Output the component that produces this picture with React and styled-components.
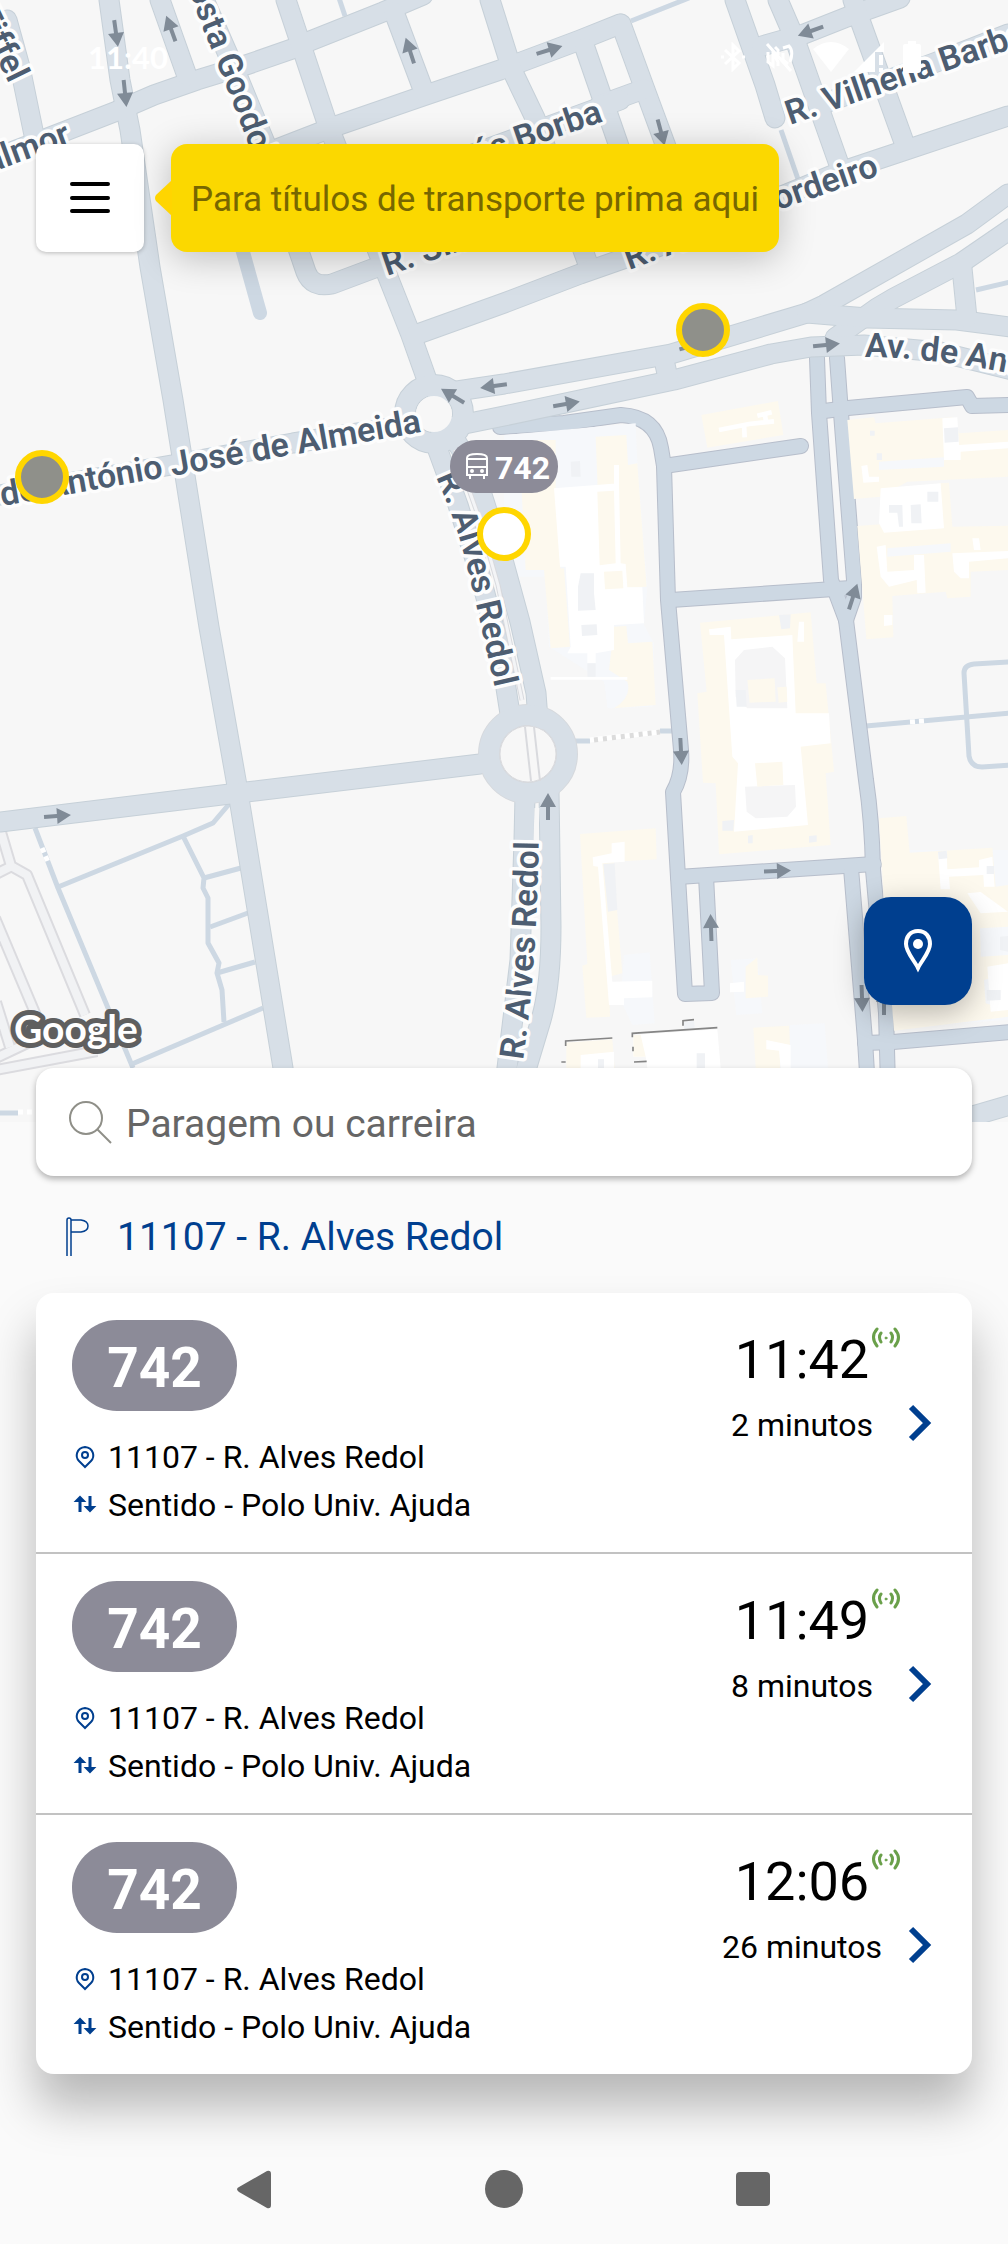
import React from 'react';
import styled, { createGlobalStyle } from 'styled-components';

const GlobalStyle = createGlobalStyle`
    * {
        box-sizing: border-box;
    }
    body {
        margin: 0;
        background-color: #fafafa;
        font-family: Roboto, "Noto Sans", sans-serif;
    }
    button, input {
        font-family: inherit;
    }
`
const Pagina = styled.div`
    display: flex;
    flex-direction: column;
    min-height: 100vh;
`
const ContainerMapa = styled.section`
    position: relative;
    display: flex;
    flex-direction: column;
    height: 1122px;
    padding: 0 36px 117px;
    background-color: #f7f7f7;
    overflow: hidden;
`
const DesenhoMapa = styled.svg`
    position: absolute;
    top: 0;
    left: 0;
    width: 100%;
    height: 100%;
`
const Rotulo = styled.text`
    font-family: Roboto, sans-serif;
    font-size: 34px;
    font-weight: 600;
    fill: #4d5d71;
    stroke: #fdfdfd;
    stroke-width: 7px;
    stroke-linejoin: round;
    paint-order: stroke;
`
const NumeroMapa = styled.text`
    font-family: Roboto, sans-serif;
    font-size: 32px;
    font-weight: 700;
    fill: white;
`
const LogoGoogle = styled.text`
    font-family: Lato, sans-serif;
    font-size: 39px;
    font-weight: 700;
    fill: white;
    stroke: #5f5f5f;
    stroke-width: 10px;
    stroke-linejoin: round;
    paint-order: stroke;
`
const BarraEstado = styled.div`
    position: relative;
    display: flex;
    justify-content: space-between;
    align-items: center;
    height: 114px;
    padding: 0 50px 0 52px;
    color: white;
`
const Hora = styled.span`
    font-family: Lato, sans-serif;
    font-size: 31px;
    font-weight: 700;
`
const IconesEstado = styled.div`
    display: flex;
    align-items: center;
    gap: 18px;
`
const IconesRede = styled.div`
    display: flex;
    align-items: center;
    gap: 4px;
`
const Topo = styled.header`
    position: relative;
    display: flex;
    gap: 27px;
    margin-top: 30px;
`
const BotaoMenu = styled.button`
    display: flex;
    justify-content: center;
    align-items: center;
    width: 108px;
    height: 108px;
    padding: 0;
    border: none;
    border-radius: 10px;
    background-color: white;
    box-shadow: 0 1px 4px rgba(0, 0, 0, 0.25);
    cursor: pointer;
`
const Aviso = styled.div`
    position: relative;
    display: flex;
    align-items: center;
    height: 108px;
    padding: 2px 20px 0;
    border-radius: 16px;
    background-color: #fbd800;
    box-shadow: 0 6px 36px rgba(0, 0, 0, 0.24);
    color: #776700;
    font-size: 35px;
    white-space: nowrap;
`
const SetaAviso = styled.svg`
    position: absolute;
    left: -16px;
    top: 36px;
`
const BotaoLocal = styled.button`
    position: relative;
    display: flex;
    justify-content: center;
    align-items: center;
    align-self: flex-end;
    width: 108px;
    height: 108px;
    margin-top: auto;
    padding: 0;
    border: none;
    border-radius: 27px;
    background-color: #003f8f;
    box-shadow: 0 8px 30px rgba(0, 0, 0, 0.28);
    cursor: pointer;
`
const Painel = styled.main`
    position: relative;
    margin-top: -54px;
    padding: 0 36px;
`
const Pesquisa = styled.label`
    display: flex;
    align-items: center;
    gap: 14px;
    height: 108px;
    padding: 0 32px;
    border-radius: 18px;
    background-color: white;
    box-shadow: 0 3px 6px rgba(0, 0, 0, 0.3);
`
const CampoPesquisa = styled.input`
    flex: 1;
    min-width: 0;
    height: 60px;
    padding: 4px 0 0;
    border: none;
    outline: none;
    background: transparent;
    color: #666666;
    font-size: 39px;
    &::placeholder {
        color: #666666;
        opacity: 1;
    }
`
const Paragem = styled.h1`
    display: flex;
    align-items: center;
    gap: 27px;
    height: 117px;
    margin: 0;
    padding: 4px 28px 0;
    color: #003f8f;
    font-size: 39px;
    font-weight: 400;
`
const Lista = styled.ul`
    margin: 0;
    padding: 0;
    list-style: none;
    border-radius: 18px;
    background-color: white;
    box-shadow: 0 33px 48px rgba(0, 0, 0, 0.27);
`
const Passagem = styled.li`
    display: flex;
    justify-content: space-between;
    height: 261px;
    padding: 27px 36px;
    border-bottom: 2px solid #c2c2c2;
    &:last-child {
        height: 259px;
        border-bottom: none;
    }
`
const Carreira = styled.div`
    display: flex;
    justify-content: center;
    align-items: center;
    width: 165px;
    height: 91px;
    margin-bottom: 22px;
    padding-top: 4px;
    border-radius: 45px;
    background-color: #8c8b98;
    color: white;
    font-size: 55px;
    font-weight: 700;
`
const Detalhe = styled.div`
    display: flex;
    align-items: center;
    gap: 10px;
    height: 48px;
    color: black;
    font-size: 32px;
    svg {
        width: 26px;
    }
`
const Chegada = styled.div`
    display: flex;
    align-items: flex-start;
`
const Tempo = styled.div`
    display: flex;
    flex-direction: column;
    align-items: center;
    width: 180px;
    color: black;
`
const HoraChegada = styled.time`
    position: relative;
    height: 72px;
    font-size: 54px;
    line-height: 80px;
`
const SinalVivo = styled.svg`
    position: absolute;
    left: 100%;
    top: 6px;
`
const Minutos = styled.span`
    font-size: 32px;
    line-height: 66px;
`
const BotaoDetalhe = styled.button`
    display: flex;
    width: 24px;
    height: 40px;
    margin: 83px 4px 0 16px;
    padding: 0;
    border: none;
    background: transparent;
    cursor: pointer;
`
const Navegacao = styled.nav`
    display: flex;
    justify-content: center;
    gap: 210px;
    margin-top: 96px;
    padding-bottom: 34px;
`
const BotaoNavegacao = styled.button`
    display: flex;
    width: 39px;
    height: 39px;
    padding: 0;
    border: none;
    background: transparent;
    cursor: pointer;
`

const ruas = [
    'M109 0L120 80L130 130L150 267L173 400L209 627L236 780L283 1068L290 1122',
    'M-10 160L68 130L117 111L154 95L197 80L246 65L292 49L310 41L383 12L423 -5',
    'M160 0L187 76',
    'M202 -5L237 75L268 150L290 225L306 272Q312 288 332 284L380 266',
    'M286 0L326 120L388 277L411 335L427 380',
    'M274 150L336 126L423 96L500 70L524 61L580 40L620 24',
    'M394 12L424 92',
    'M490 0L512 70L535 118L588 264',
    'M585 48L622 155',
    'M621 24L644 87L668 152',
    'M600 105L644 89',
    'M470 155L620 100',
    'M415 335L504 303L580 274L660 246L840 172L909 149L1008 116',
    'M735 0L765 85L775 118',
    'M778 0L794 37L841 170',
    'M762 46L804 34L847 17L900 -2',
    'M853 0L861 23L905 145',
    'M820 105L934 63L1008 34',
    'M7 20L20 67L34 135',
    'M1008 194L967 224L824 305L807 313L671 354L504 384L437 394',
    'M1012 228L961 263L894 298L877 308L835 338',
    'M440 429L504 416L674 380L771 354L811 347L864 345L940 352L1012 370',
    'M807 313L867 318L957 320L1010 327',
    'M962 268L967 318',
    'M664 360L668 378',
    'M0 495L183 463L293 443L410 425',
    'M436 445L458 505L480 575L500 650L511 720',
    'M452 435L474 470L503 560L520 622L536 693L538 720',
    'M0 822L238 793L480 764',
    'M525 795L524 840L520 960L507 1068L500 1122',
    'M549 790L551 927Q551 985 541 1020L520 1090L505 1122',
    'M962 1119L1010 1105',
]
const ruasLocais = [
    'M500 427L564 423L621 415Q656 417 661 448L664 466L668 600L681 750Q683 775 673 792L678 877L685 994L712 993L706 876',
    'M664 466L801 446',
    'M671 600L834 589L852 588',
    'M817 358L819 413L831 580L846 620L866 780Q872 820 873 870L886 1013L889 1122',
    'M837 358L841 413L854 580L854 597L846 620',
    'M824 411L848 408L967 397L972 406L1010 405',
    'M678 877L874 864',
    'M851 868L865 1040L870 1122',
    'M865 1043L893 1042L1010 1032',
]
const caminhos = [
    'M339 -2L345 16', 'M631 21L689 -2', 'M781 130L799 182', 'M976 290L1010 282',
    'M575 741L590 741', 'M660 731L674 731', 'M866 726L1010 713',
    'M1010 662L974 664Q964 665 964 673L969 756Q971 767 982 767L1010 765',
    'M35 828L58 888L133 1068',
    'M58 887L183 836L213 823L230 803',
    'M183 836L204 878L203 888L208 898L208 943L219 963L217 973L222 990L224 1022',
    'M204 878L241 868', 'M210 927L248 913', 'M217 973L255 962', 'M132 1064L263 1008',
    'M0 1113L18 1113',
]
const trilhos = [
    'M-2 822L11 866L27 875L85 1015', 'M-4 874L12 866', 'M-5 918L38 1020',
    'M-4 1002L10 1047', 'M-4 1058L34 1040', 'M-4 1070L97 1051',
]
const setas = [
    [116, 33, 82], [125, 93, 84], [171, 29, -110], [410, 51, -108], [453, 396, -149],
    [494, 386, 172], [549, 50, -17], [811, 31, 160], [661, 132, 75], [826, 345, -6],
    [566, 404, -10], [692, 346, -15], [853, 597, -72], [681, 751, 87], [548, 807, -90],
    [777, 871, -2], [711, 928, -92], [862, 998, 88], [884, 1002, -90], [57, 816, -4],
]
const passagens = [
    { hora: '11:42', minutos: '2 minutos' },
    { hora: '11:49', minutos: '8 minutos' },
    { hora: '12:06', minutos: '26 minutos' },
]

// Edificios: cada grupo usa uma grelha com 3 unidades por pixel
function Edificios() {
    return (
        <g>
            <g transform="translate(504 380) scale(0.333333)">
                <path fill="#f6f8fb" d="M0 165L395 130L400 250L430 620L420 735L450 790L445 980L310 985L300 905L140 910L100 600L35 595L0 400Z" />
                <path fill="#f7f7f7" d="M45 590L125 590L135 800L300 905L310 985L130 985L125 900Z" />
                <path fill="#fdf9ee" d="M45 180L155 180L155 330L170 570L65 570ZM275 170L367 165L372 255L400 250L428 620L300 628L290 560ZM120 570L180 565L198 800L140 805ZM330 740L367 738L372 790L445 785L455 975L330 985Q385 950 370 905L315 870Z" />
                <path fill="#ffffff" d="M150 325L345 310L350 550L365 552L370 622L415 622L420 730L330 735L330 810L275 820L275 850L250 850L250 820L190 820L200 800L185 560L168 560ZM330 255L345 255L345 330L330 330Z" />
                <path fill="#fdf9ee" d="M280 335L330 332L335 550L287 556ZM300 575L355 572L358 625L303 628Z" />
                <path fill="#f0f2f5" d="M200 245L228 243L230 290L202 290ZM230 580L270 580L270 640L275 690L222 692L222 620ZM232 735L278 733L280 765L234 768ZM250 850L275 850L275 890L250 890Z" />
                <path stroke="#ffffff" strokeWidth="8" d="M140 895L370 895" />
                <path fill="#fdf9ee" d="M592 105L822 63L838 165L610 203Z" />
                <path stroke="#ffffff" strokeWidth="14" fill="none" d="M645 150L735 132L810 124M720 130L722 172M760 107L803 97M782 100L787 130" />
                <path fill="#fdf9ee" d="M1030 120L1110 112L1115 130L1345 112L1365 160L1512 150L1512 290L1210 305L1130 350L1050 357Z" />
                <path fill="#fdf9ee" d="M1060 438L1140 432L1145 455L1310 445L1305 310L1335 308L1345 440L1512 437L1512 570L1400 575L1400 650L1330 655L1325 635L1165 648L1168 772L1087 778Z" />
                <path fill="#f6f8fb" d="M1125 245L1320 232L1320 260L1125 270ZM1150 505L1340 490L1340 515L1150 530Z" />
                <path fill="#ffffff" d="M1315 115L1360 112L1365 195L1512 185L1512 205L1370 215L1370 240L1320 240ZM1130 325L1310 310L1320 445L1140 458L1125 430ZM1072 258L1090 255L1095 290L1125 290L1125 305L1078 308ZM1118 500L1145 495L1150 575L1230 570L1230 525L1260 525L1265 638L1240 640L1238 600L1155 620L1130 590ZM1345 520L1512 513L1512 535L1395 545L1395 595L1370 595L1350 575ZM1405 475L1425 475L1430 510L1410 510ZM1140 705L1165 705L1165 735L1140 738Z" />
                <path fill="#f0f2f5" d="M1220 375L1250 373L1253 430L1222 430ZM1155 375L1195 375L1197 440L1185 440L1180 398L1155 398ZM1270 335L1303 335L1303 365L1270 365ZM1320 145L1362 142L1364 185L1322 188ZM1098 152L1112 152L1112 167L1098 167ZM1118 220L1134 220L1134 240L1118 240Z" />
                <path fill="#fdf9ee" d="M588 728L920 697L938 910L965 910L990 1175L965 1180L980 1395L645 1423L635 1210L597 1208L580 940L608 935Z" />
                <path fill="#ffffff" d="M615 748L680 740L682 778L865 765L875 1000L975 1000L980 1090L890 1100L912 1335L690 1355L702 1150L685 1130L660 765L617 765ZM885 725L900 725L900 785L880 785Z" />
                <path fill="#f5f5f6" d="M693 840L720 810L805 800L843 835L850 985L730 985L695 950ZM723 1220L873 1215L876 1280L850 1310L755 1315L728 1295Z" />
                <path fill="#fdf9ee" d="M730 900L812 895L815 965L737 968ZM820 922L848 920L850 965L824 968ZM753 1150L835 1145L838 1215L760 1220Z" />
                <path fill="#f0f2f5" d="M825 705L860 703L858 745L832 748ZM695 930L725 930L728 980L698 980ZM655 1323L690 1320L688 1352L655 1352ZM732 1367L746 1365L746 1390L732 1390ZM915 1368L938 1366L938 1385L915 1388Z" />
            </g>
            <g transform="translate(504 760) scale(0.333333)">
                <path fill="#f6f8fb" d="M360 585L437 577L452 790L385 795L350 720ZM680 600L760 595L775 760L697 765ZM858 795L962 790L972 924L858 924ZM1217 270L1512 270L1512 780L1200 800Z" />
                <path fill="#fdf9ee" d="M228 222L455 205L458 298L330 305L340 460L355 640L315 650L318 770L247 773L235 617L250 612Z" />
                <path fill="#ffffff" d="M323 250L362 245L362 305L295 310L325 665L445 662L445 712L360 715L360 735L315 735L282 320L268 318L266 292L323 280Z" />
                <path fill="#f0f2f5" d="M298 312L332 310L340 450L312 455Z" />
                <path fill="#fdf9ee" d="M725 620L760 592L762 645L792 647L792 710L725 715Z" />
                <path fill="#ffffff" d="M678 670L720 665L720 695L678 697ZM388 825L640 808L650 924L430 924L425 890L388 890Z" />
                <path fill="#fdf9ee" d="M187 848L325 838L332 924L187 924ZM388 825L410 825L425 890L388 890ZM748 803L855 797L858 860L828 870L828 924L755 924Z" />
                <path fill="#ffffff" d="M230 885L330 875L330 924L230 924ZM787 840L860 855L860 924L830 924L825 872L787 868Z" />
                <path fill="#f0f2f5" d="M578 880L603 880L603 924L578 924ZM282 898L300 898L300 924L282 924ZM540 785L570 782L572 803L540 808Z" />
                <path fill="none" stroke="#858585" strokeWidth="5" d="M185 858V843L325 834M385 832V820L640 803M537 797V782L570 779M172 906H185M390 906L428 904M387 860V874" />
                <path fill="#fdf9ee" d="M1125 175L1207 168L1217 278L1465 263L1475 380L1512 375L1512 500L1428 505L1430 590L1512 585L1512 640L1440 660L1445 730L1512 750L1512 770L1170 812L1140 430Z" />
                <path fill="#ffffff" d="M1302 280L1328 272L1330 328L1425 322L1425 300L1465 290L1472 380L1440 380L1438 345L1335 350L1338 388L1310 388ZM1390 400L1430 396L1512 455L1430 460ZM1450 620L1512 610L1512 750L1460 755Z" />
                <path fill="#f0f2f5" d="M1448 318L1470 318L1470 342L1448 342ZM1302 275L1328 272L1330 295L1304 298ZM1448 690L1490 690L1490 720L1448 722ZM1488 530L1512 528L1512 575L1488 570Z" />
            </g>
        </g>
    )
}

function Mapa() {
    return (
        <DesenhoMapa viewBox="0 0 1008 1122" preserveAspectRatio="xMidYMid slice" role="img" aria-label="Mapa">
            <rect width="1008" height="1122" fill="#f7f7f7" />
            <g fill="none" strokeLinejoin="round">
                {trilhos.map(d => <path key={d} d={d} stroke="#dbdbdf" strokeWidth="12" />)}
                {trilhos.map(d => <path key={d} d={d} stroke="#f1f2f4" strokeWidth="8" />)}
                {caminhos.map(d => <path key={d} d={d} stroke="#cdd8e3" strokeWidth="5" />)}
                <path d="M590 740L660 732" stroke="#ffffff" strokeWidth="5" />
                <path d="M594 740L660 732" stroke="#dcdcdc" strokeWidth="5" strokeDasharray="4 5" />
                <path d="M42 848L48 862M910 722L924 721M18 1112L36 1112" stroke="#ffffff" strokeWidth="5" strokeDasharray="5 4" />
                <path d="M232 215L243 252L260 313" stroke="#cdd8e3" strokeWidth="14" strokeLinecap="round" />
                {ruasLocais.map(d => <path key={d} d={d} stroke="#b7becb" strokeWidth="16" strokeLinecap="round" />)}
                {ruasLocais.map(d => <path key={d} d={d} stroke="#cdd8e3" strokeWidth="14" strokeLinecap="round" />)}
            </g>
            <Edificios />
            <g fill="none" strokeLinejoin="round">
                {ruas.map(d => <path key={d} d={d} stroke="#c6d0d8" strokeWidth="21" strokeLinecap="round" />)}
                <circle cx="434" cy="414" r="29" stroke="#c6d0d8" strokeWidth="22" />
                <circle cx="528" cy="754" r="39" stroke="#d6d9dd" strokeWidth="22" />
                {ruas.map(d => <path key={d} d={d} stroke="#d7dfe7" strokeWidth="19" strokeLinecap="round" />)}
                <circle cx="434" cy="414" r="29" stroke="#d7dfe7" strokeWidth="20" />
                <circle cx="528" cy="754" r="39" stroke="#d7dfe7" strokeWidth="20" />
            </g>
            <circle cx="434" cy="414" r="18" fill="#f7f7f7" />
            <circle cx="528" cy="754" r="28" fill="#f7f7f7" stroke="#d9dade" />
            <path d="M525 727L531 781M534 727L540 781" stroke="#d9dade" strokeWidth="2" />
            <path d="M455 450L478 515L498 585L522 700" fill="none" stroke="#d9dade" strokeWidth="5" />
            <path d="M455 450L478 515L498 585L522 700" fill="none" stroke="#f3f4f6" strokeWidth="3" />
            <path d="M537 808L536 840" stroke="#f7f7f7" strokeWidth="5" />
            {setas.map(([x, y, angulo]) => (
                <path key={x + '-' + y} transform={`translate(${x} ${y}) rotate(${angulo})`} fill="#808b97" d="M-13 -2H0V-8L14 0L0 8V2H-13Z" />
            ))}

            <path id="alvesSul" fill="none" d="M523 1060Q538 960 539 820" />
            <path id="alvesNorte" fill="none" d="M436 477Q457 523 468 570T500 710" />
            <path id="goodolfim" fill="none" d="M180 -32L202 26Q236 110 262 180" />
            <path id="antonio" fill="none" d="M865 357Q940 357 1040 380" />
            <Rotulo><textPath href="#alvesSul">R. Alves Redol</textPath></Rotulo>
            <Rotulo><textPath href="#alvesNorte">R. Alves Redol</textPath></Rotulo>
            <Rotulo><textPath href="#goodolfim">Costa Goodolfim</textPath></Rotulo>
            <Rotulo><textPath href="#antonio">Av. de António</textPath></Rotulo>
            <Rotulo transform="translate(2 506) rotate(-10)">de António José de Almeida</Rotulo>
            <Rotulo transform="translate(72 143) rotate(-20)" textAnchor="end">R. Visc. Valmor</Rotulo>
            <Rotulo transform="translate(9 84) rotate(64)" textAnchor="end">R. Eiffel</Rotulo>
            <Rotulo transform="translate(604 121) rotate(-19)" textAnchor="end">Tomás Borba</Rotulo>
            <Rotulo transform="translate(387 276) rotate(-19)">R. Sinais</Rotulo>
            <Rotulo transform="translate(629 270) rotate(-20)">R. A.</Rotulo>
            <Rotulo transform="translate(880 175) rotate(-19)" textAnchor="end">Cordeiro</Rotulo>
            <Rotulo transform="translate(790 125) rotate(-19)">R. Vilhena Barbosa</Rotulo>

            <circle cx="703" cy="330" r="24" fill="#8f908a" stroke="#ffd600" strokeWidth="6" />
            <circle cx="42" cy="477" r="24" fill="#8f908a" stroke="#ffd600" strokeWidth="6" />
            <circle cx="504" cy="534" r="24" fill="#ffffff" stroke="#ffd600" strokeWidth="6" />
            <rect x="450" y="440" width="108" height="53" rx="26" fill="#8c8b98" />
            <g fill="none" stroke="#ffffff" strokeWidth="2">
                <path d="M467 475V458Q467 454 477 454T487 458V475ZM467 459H487M467 467H487M470 475V479M484 475V479" />
                <circle cx="472" cy="471" r="1" />
                <circle cx="482" cy="471" r="1" />
            </g>
            <NumeroMapa x="495" y="479">742</NumeroMapa>
            <LogoGoogle x="14" y="1043">Google</LogoGoogle>
        </DesenhoMapa>
    )
}

function Estado() {
    return (
        <BarraEstado>
            <Hora>11:40</Hora>
            <IconesEstado>
                <svg width="26" height="30" viewBox="0 0 26 30" fill="none" stroke="white" strokeWidth="3">
                    <path d="M5 8L19 21L13 27V3L19 9L5 22" />
                    <path d="M1 15H4M22 15H25" />
                </svg>
                <svg width="30" height="30" viewBox="0 0 30 30" fill="none" stroke="white" strokeWidth="3">
                    <path d="M3 2L27 29M4 10V20L9 24V11L14 20V24M11 5L14 8V13M19 6L25 4Q30 9 26 20M19 11V18L24 22" />
                </svg>
                <IconesRede>
                    <svg width="38" height="32" viewBox="0 0 38 32" fill="white">
                        <path d="M1 8Q19 -6 37 8L19 31Z" />
                    </svg>
                    <svg width="30" height="30" viewBox="0 0 30 30" fill="white">
                        <path d="M0 30L30 0V10H21V30ZM25 13H29V23H25ZM25 26H29V30H25Z" />
                    </svg>
                </IconesRede>
                <svg width="20" height="32" viewBox="0 0 20 32" fill="white">
                    <path d="M6 0H14V3H17Q19 3 19 5V29Q19 32 16 32H4Q1 32 1 29V5Q1 3 3 3H6Z" />
                </svg>
            </IconesEstado>
        </BarraEstado>
    )
}

class App extends React.Component {
    render() {
        return (
            <Pagina>
                <GlobalStyle />
                <ContainerMapa>
                    <Mapa />
                    <Estado />
                    <Topo>
                        <BotaoMenu aria-label="Menu">
                            <svg width="42" height="34" viewBox="0 0 42 34" stroke="black" strokeWidth="4" strokeLinecap="round">
                                <path d="M3 3H39M3 17H39M3 30H39" />
                            </svg>
                        </BotaoMenu>
                        <Aviso>
                            <SetaAviso width="17" height="36" viewBox="0 0 17 36">
                                <path d="M17 0L1 15Q-1 18 1 21L17 36Z" fill="#ffd500" />
                            </SetaAviso>
                            Para títulos de transporte prima aqui
                        </Aviso>
                    </Topo>
                    <BotaoLocal aria-label="A minha localização">
                        <svg width="30" height="44" viewBox="0 0 30 44">
                            <path d="M15 2C7 2 3 8 3 15C3 23 11 31 15 39C19 31 27 23 27 15C27 8 23 2 15 2Z" fill="none" stroke="white" strokeWidth="4" />
                            <circle cx="15" cy="15" r="5" fill="white" />
                        </svg>
                    </BotaoLocal>
                </ContainerMapa>

                <Painel>
                    <Pesquisa>
                        <svg width="44" height="44" viewBox="0 0 44 44" fill="none" stroke="#8f8f88" strokeWidth="2">
                            <circle cx="18" cy="18" r="16" />
                            <path d="M29 29L43 43" />
                        </svg>
                        <CampoPesquisa type="text" placeholder="Paragem ou carreira" aria-label="Paragem ou carreira" />
                    </Pesquisa>
                    <Paragem>
                        <svg width="26" height="40" viewBox="0 0 26 40" fill="none" stroke="#003f8f" strokeWidth="1.5">
                            <path d="M3 39V3Q3 1 5 1T7 3V39M7 3H17Q24 4 24 9T17 15H7" />
                        </svg>
                        11107 - R. Alves Redol
                    </Paragem>
                    <Lista>
                        {passagens.map(passagem => (
                            <Passagem key={passagem.hora}>
                                <div>
                                    <Carreira>742</Carreira>
                                    <Detalhe>
                                        <svg height="24" viewBox="0 0 26 24" fill="none" stroke="#003f8f" strokeWidth="2">
                                            <path d="M13 22L7 16C3 12 4 3 13 2C22 3 23 12 19 16Z" />
                                            <circle cx="13" cy="10" r="3" />
                                        </svg>
                                        11107 - R. Alves Redol
                                    </Detalhe>
                                    <Detalhe>
                                        <svg height="24" viewBox="0 0 26 24" fill="#003f8f" stroke="#003f8f" strokeWidth="2">
                                            <path d="M8 19V5M18 3V17" strokeWidth="3" />
                                            <path d="M4 8L8 4L12 8ZM14 14L18 18L22 14Z" />
                                        </svg>
                                        Sentido - Polo Univ. Ajuda
                                    </Detalhe>
                                </div>
                                <Chegada>
                                    <Tempo>
                                        <HoraChegada>
                                            {passagem.hora}
                                            <SinalVivo width="32" height="24" viewBox="0 0 32 24" fill="none" stroke="#6aa04a" strokeWidth="3" strokeLinecap="round">
                                                <path d="M8 3Q1 11 8 20M12 7Q9 11 12 16M22 7Q25 11 22 16M26 3Q33 11 26 20" />
                                                <circle cx="17" cy="12" r="1" fill="#6aa04a" strokeWidth="1" />
                                            </SinalVivo>
                                        </HoraChegada>
                                        <Minutos>{passagem.minutos}</Minutos>
                                    </Tempo>
                                    <BotaoDetalhe aria-label="Ver detalhe">
                                        <svg width="24" height="40" viewBox="0 0 24 40" fill="none" stroke="#003f8f" strokeWidth="6">
                                            <path d="M3 4L19 20L3 36" />
                                        </svg>
                                    </BotaoDetalhe>
                                </Chegada>
                            </Passagem>
                        ))}
                    </Lista>
                </Painel>

                <Navegacao>
                    <BotaoNavegacao aria-label="Voltar">
                        <svg width="39" height="39" viewBox="0 0 39 39" fill="#666666">
                            <path d="M3 17L31 1Q35 0 35 4V35Q35 39 31 38L3 22Q-1 19 3 17Z" />
                        </svg>
                    </BotaoNavegacao>
                    <BotaoNavegacao aria-label="Início">
                        <svg width="39" height="39" viewBox="0 0 39 39" fill="#666666">
                            <circle cx="19" cy="19" r="19" />
                        </svg>
                    </BotaoNavegacao>
                    <BotaoNavegacao aria-label="Recentes">
                        <svg width="39" height="39" viewBox="0 0 39 39" fill="#666666">
                            <rect x="2" y="2" width="34" height="34" rx="4" />
                        </svg>
                    </BotaoNavegacao>
                </Navegacao>
            </Pagina>
        );
    }
}

export default App
